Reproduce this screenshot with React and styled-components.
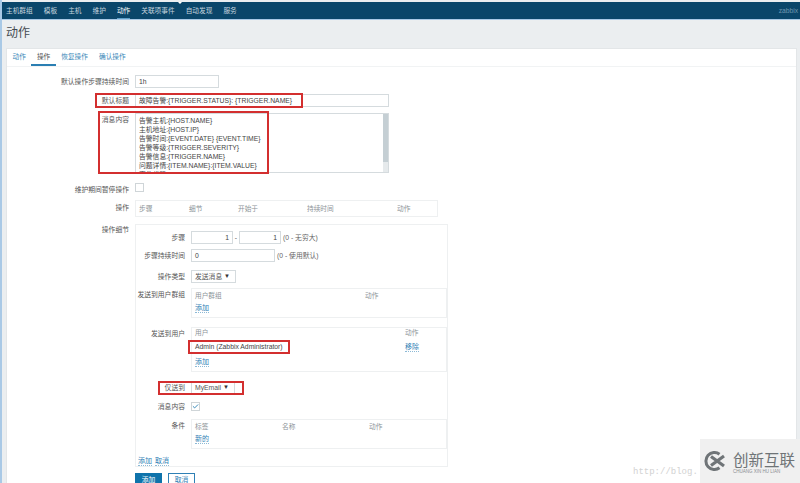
import React from 'react';
import styled, { createGlobalStyle } from 'styled-components';
import { Check } from 'lucide-react';

const GlobalStyle = createGlobalStyle`
  html, body {
    margin: 0;
    padding: 0;
    height: 483px;
    overflow: hidden;
    background: #ebeef0;
    font-family: "Liberation Sans", "Noto Sans CJK SC", sans-serif;
    font-size: 6.8px;
    color: #555555;
  }
`;

const navItems = ['主机群组', '模板', '主机', '维护', '动作', '关联项事件', '自动发现', '服务'];
const tabItems = ['动作', '操作', '恢复操作', '确认操作'];
const messageLines = [
  '告警主机:{HOST.NAME}',
  '主机地址:{HOST.IP}',
  '告警时间:{EVENT.DATE} {EVENT.TIME}',
  '告警等级:{TRIGGER.SEVERITY}',
  '告警信息:{TRIGGER.NAME}',
  '问题详情:{ITEM.NAME}:{ITEM.VALUE}',
  '事件代码:{EVENT.ID}',
];

export default function App() {
  return (
    <Page>
      <GlobalStyle />
      <TopNav>
        <NavList>
          {navItems.map((item) => (
            <NavItem key={item} $active={item === '动作'}>{item}</NavItem>
          ))}
        </NavList>
        <NavUser>zabbix</NavUser>
      </TopNav>
      <Title>动作</Title>
      <Card>
        <Tabs>
          {tabItems.map((item) => (
            <Tab key={item} $active={item === '操作'}>{item}</Tab>
          ))}
        </Tabs>
        <Form>
          <Row $top={8}>
            <Label>默认操作步骤持续时间</Label>
            <Input $w={84}>1h</Input>
          </Row>
          <Row $top={6}>
            <Label>默认标题</Label>
            <Input $w={254}>故障告警:{'{TRIGGER.STATUS}'}: {'{TRIGGER.NAME}'}</Input>
            <RedBox $x={88} $y={-1} $w={208} $h={15} />
          </Row>
          <Row $top={6}>
            <Label>消息内容</Label>
            <TextArea>
              {messageLines.map((line) => <div key={line}>{line}</div>)}
              <ScrollTrack><ScrollThumb /></ScrollTrack>
            </TextArea>
            <RedBox $x={91} $y={-2} $w={171} $h={63} />
          </Row>
          <Row $top={10}>
            <Label>维护期间暂停操作</Label>
            <CheckBox />
          </Row>
          <Row $top={5} $center>
            <Label $flat>操作</Label>
            <OperationsTable>
              <HeadCell $w={50}>步骤</HeadCell>
              <HeadCell $w={49}>细节</HeadCell>
              <HeadCell $w={69}>开始于</HeadCell>
              <HeadCell $w={90}>持续时间</HeadCell>
              <HeadCell>动作</HeadCell>
            </OperationsTable>
          </Row>
          <Row $top={7}>
            <Label>操作细节</Label>
            <DetailPanel>
              <InnerRow $top={0}>
                <InnerLabel>步骤</InnerLabel>
                <Input $w={42} $right>1</Input>
                <Dash>-</Dash>
                <Input $w={42} $right>1</Input>
                <Hint>(0 - 无穷大)</Hint>
              </InnerRow>
              <InnerRow $top={5}>
                <InnerLabel>步骤持续时间</InnerLabel>
                <Input $w={84}>0</Input>
                <Hint>(0 - 使用默认)</Hint>
              </InnerRow>
              <InnerRow $top={8}>
                <InnerLabel>操作类型</InnerLabel>
                <Select $w={45}>发送消息<Arrow>▼</Arrow></Select>
              </InnerRow>
              <InnerRow $top={5}>
                <InnerLabel>发送到用户群组</InnerLabel>
                <SubTable $h={30} $pad={2.5} $gap={3}>
                  <SubHead>
                    <HeadCell $w={170}>用户群组</HeadCell>
                    <HeadCell>动作</HeadCell>
                  </SubHead>
                  <Link>添加</Link>
                </SubTable>
              </InnerRow>
              <InnerRow $top={9}>
                <InnerLabel>发送到用户</InnerLabel>
                <SubTable $h={45} $pad={0.5} $gap={5}>
                  <SubHead>
                    <HeadCell $w={210}>用户</HeadCell>
                    <HeadCell>动作</HeadCell>
                  </SubHead>
                  <UserRow>
                    <UserName>Admin (Zabbix Administrator)</UserName>
                    <Link>移除</Link>
                  </UserRow>
                  <Link>添加</Link>
                </SubTable>
                <RedBox $x={52} $y={13} $w={102} $h={14} />
              </InnerRow>
              <InnerRow $top={9}>
                <InnerLabel>仅送到</InnerLabel>
                <Select $w={44}>MyEmail<Arrow>▼</Arrow></Select>
                <RedBox $x={22} $y={0} $w={86} $h={14} />
              </InnerRow>
              <InnerRow $top={8}>
                <InnerLabel $tight>消息内容</InnerLabel>
                <CheckBox><Check size={7} strokeWidth={3} color="#1f7ab0" /></CheckBox>
              </InnerRow>
              <InnerRow $top={7}>
                <InnerLabel>条件</InnerLabel>
                <SubTable $h={30} $pad={2.5} $gap={3}>
                  <SubHead>
                    <HeadCell $w={87}>标签</HeadCell>
                    <HeadCell $w={87}>名称</HeadCell>
                    <HeadCell>动作</HeadCell>
                  </SubHead>
                  <Link>新的</Link>
                </SubTable>
              </InnerRow>
              <PanelLinks>
                <Link>添加</Link>
                <Link>取消</Link>
              </PanelLinks>
            </DetailPanel>
          </Row>
          <Buttons>
            <PrimaryButton>添加</PrimaryButton>
            <GhostButton>取消</GhostButton>
          </Buttons>
        </Form>
      </Card>
      <BlogMark>http://blog.</BlogMark>
      <Watermark>
        <svg width="24" height="20" viewBox="0 0 24 20">
          <path d="M16.500 3.200A8.500 8.500 0 1 0 16.500 16.800" fill="none" stroke="#6f7477" strokeWidth="3" />
          <path d="M8 5.500L21 15M21 5L8 14.500" fill="none" stroke="#6f7477" strokeWidth="3.200" />
        </svg>
        <Brand>
          <BrandName>创新互联</BrandName>
          <BrandSub>CHUANG XIN HU LIAN</BrandSub>
        </Brand>
      </Watermark>
    </Page>
  );
}

const Page = styled.div`
  position: relative;
  box-sizing: border-box;
  width: 800px;
  height: 483px;
  overflow: hidden;
  border-left: 2px solid #a9c9e6;
`;

const TopNav = styled.div`
  position: relative;
  display: flex;
  align-items: center;
  justify-content: space-between;
  height: 17px;
  margin: 2px 0 0 -2px;
  padding: 0 2px 0 6px;
  background: #0a466a;
  border-bottom: 1px solid #a9c9e6;
  &::before {
    content: '';
    position: absolute;
    left: 178px;
    top: 0;
    border: 2px solid transparent;
    border-top-color: #ffffff;
  }
`;

const NavList = styled.div`
  display: flex;
  gap: 11px;
  height: 100%;
`;

const NavItem = styled.div`
  display: flex;
  align-items: center;
  box-sizing: border-box;
  height: 100%;
  font-size: 6.7px;
  color: ${(p) => (p.$active ? '#ffffff' : '#c5d5df')};
  border-bottom: 1px solid ${(p) => (p.$active ? '#5f9fc8' : 'transparent')};
`;

const NavUser = styled.div`
  font-size: 6.7px;
  color: #6f97b0;
`;

const Title = styled.div`
  box-sizing: border-box;
  height: 28px;
  padding: 3px 0 0 4px;
  font-size: 12px;
  line-height: 20px;
  color: #444b50;
`;

const Card = styled.div`
  box-sizing: border-box;
  width: 791px;
  height: 440px;
  margin-left: 4px;
  background: #ffffff;
  border: 1px solid #e3e6e8;
`;

const Tabs = styled.div`
  display: flex;
  height: 17px;
  border-bottom: 1px solid #f1f3f4;
`;

const Tab = styled.div`
  display: flex;
  align-items: center;
  box-sizing: border-box;
  height: 17px;
  padding: 0 5.5px 1px;
  font-size: 6.7px;
  color: ${(p) => (p.$active ? '#4f4f4f' : '#3a87b8')};
  border-bottom: 2px solid ${(p) => (p.$active ? '#2b7fb3' : 'transparent')};
`;

const Form = styled.div`
  display: flex;
  flex-direction: column;
`;

const Row = styled.div`
  position: relative;
  display: flex;
  align-items: ${(p) => (p.$center ? 'center' : 'flex-start')};
  margin-top: ${(p) => p.$top}px;
`;

const Label = styled.div`
  flex: none;
  width: 122px;
  margin-right: 6px;
  padding-top: ${(p) => (p.$flat ? 0 : 1.5)}px;
  text-align: right;
  line-height: 10px;
`;

const Input = styled.div`
  flex: none;
  box-sizing: border-box;
  width: ${(p) => p.$w}px;
  height: 13px;
  padding: 0 3px;
  line-height: 11px;
  white-space: nowrap;
  text-align: ${(p) => (p.$right ? 'right' : 'left')};
  background: #ffffff;
  border: 1px solid #d5dbde;
  color: #444;
`;

const TextArea = styled.div`
  position: relative;
  box-sizing: border-box;
  width: 254px;
  height: 60px;
  padding: 2px 3px;
  overflow: hidden;
  line-height: 9px;
  border: 1px solid #d5dbde;
  color: #444;
`;

const ScrollTrack = styled.div`
  position: absolute;
  top: 0;
  right: 0;
  bottom: 0;
  width: 5px;
  background: #e6eaec;
`;

const ScrollThumb = styled.div`
  height: 48px;
  background: #c5cfd4;
`;

const CheckBox = styled.div`
  display: flex;
  align-items: center;
  justify-content: center;
  box-sizing: border-box;
  width: 9px;
  height: 9px;
  border: 1px solid #cfd5d8;
`;

const OperationsTable = styled.div`
  display: flex;
  align-items: center;
  box-sizing: border-box;
  width: 303px;
  height: 17px;
  padding-left: 3px;
  border: 1px solid #eef0f1;
`;

const HeadCell = styled.div`
  flex: none;
  width: ${(p) => (p.$w ? `${p.$w}px` : 'auto')};
  color: #8d9498;
  font-size: 6.7px;
`;

const DetailPanel = styled.div`
  box-sizing: border-box;
  width: 313px;
  height: 243px;
  padding: 6px 0 0;
  border: 1px solid #eef0f1;
`;

const InnerRow = styled.div`
  position: relative;
  display: flex;
  align-items: flex-start;
  margin-top: ${(p) => p.$top}px;
`;

const InnerLabel = styled.div`
  flex: none;
  width: 49px;
  margin-right: 6px;
  padding-top: ${(p) => (p.$tight ? 0 : 2)}px;
  text-align: right;
  line-height: 10px;
  white-space: nowrap;
`;

const Dash = styled.div`
  width: 6px;
  line-height: 13px;
  text-align: center;
`;

const Hint = styled.div`
  margin-left: 2px;
  line-height: 13px;
  white-space: nowrap;
  color: #666;
`;

const Select = styled.div`
  display: flex;
  align-items: center;
  justify-content: space-between;
  box-sizing: border-box;
  width: ${(p) => p.$w}px;
  height: 13px;
  padding: 0 5px 0 3px;
  white-space: nowrap;
  border: 1px solid #d5dbde;
`;

const Arrow = styled.span`
  font-size: 6px;
  color: #333;
`;

const SubTable = styled.div`
  display: flex;
  flex-direction: column;
  align-items: flex-start;
  box-sizing: border-box;
  width: 256px;
  height: ${(p) => p.$h}px;
  padding: ${(p) => p.$pad}px 3px 0;
  border: 1px solid #eef0f1;
  line-height: 9px;
  gap: ${(p) => p.$gap}px;
`;

const SubHead = styled.div`
  display: flex;
  width: 100%;
`;

const UserRow = styled.div`
  display: flex;
  width: 100%;
`;

const UserName = styled.span`
  flex: none;
  width: 210px;
  color: #444;
`;

const Link = styled.span`
  font-size: 7px;
  color: #2f80b5;
  border-bottom: 1px dotted #8dbad6;
`;

const PanelLinks = styled.div`
  display: flex;
  gap: 3px;
  margin: 6px 0 0 2px;
`;

const RedBox = styled.div`
  position: absolute;
  left: ${(p) => p.$x}px;
  top: ${(p) => p.$y}px;
  box-sizing: border-box;
  width: ${(p) => p.$w}px;
  height: ${(p) => p.$h}px;
  border: 2px solid #d32f2f;
  pointer-events: none;
`;

const Buttons = styled.div`
  display: flex;
  gap: 6px;
  margin: 6px 0 0 128px;
`;

const PrimaryButton = styled.div`
  box-sizing: border-box;
  width: 27px;
  height: 14px;
  line-height: 14px;
  text-align: center;
  color: #ffffff;
  background: #0f73ab;
`;

const GhostButton = styled.div`
  box-sizing: border-box;
  width: 27px;
  height: 14px;
  line-height: 12px;
  text-align: center;
  color: #2f80b5;
  border: 1px solid #2f80b5;
`;

const BlogMark = styled.div`
  position: absolute;
  left: 631px;
  top: 467px;
  font-family: "Liberation Mono", monospace;
  font-size: 9px;
  color: #d2d2d2;
`;

const Watermark = styled.div`
  position: absolute;
  right: 0;
  bottom: 0;
  display: flex;
  align-items: center;
  gap: 6px;
  box-sizing: border-box;
  width: 100px;
  height: 44px;
  padding: 0 0 0 3px;
  background: #f0f0f0;
`;

const Brand = styled.div`
  display: flex;
  flex-direction: column;
  padding-top: 6px;
`;

const BrandName = styled.div`
  font-size: 15.500px;
  line-height: 16px;
  color: #6f7477;
  white-space: nowrap;
`;

const BrandSub = styled.div`
  font-size: 4.500px;
  line-height: 6px;
  color: #8a8e90;
  white-space: nowrap;
`;
